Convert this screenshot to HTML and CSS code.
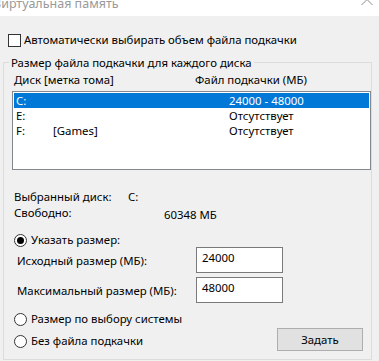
FILE: index.html
```html
<!DOCTYPE html>
<html lang="ru">
<head>
    <meta charset="UTF-8">
    <title>Виртуальная память</title>
    <link rel="stylesheet" href="styles.css">
</head>
<body>
    <div class="titlebar">
        <span class="title">Виртуальная память</span>
        <svg class="chev" width="12" height="7" viewBox="0 0 12 7"><path d="M0.5 6 L6 0.5 L11.5 6" fill="none" stroke="#8a8a8a" stroke-width="1"/></svg>
    </div>
    <div class="dialog">
        <label class="check"><span class="box"></span>Автоматически выбирать объем файла подкачки</label>
        <fieldset class="group">
            <legend>Размер файла подкачки для каждого диска</legend>
            <div class="cols">
                <span class="col-disk">Диск [метка тома]</span>
                <span>Файл подкачки (МБ)</span>
            </div>
            <div class="list">
                <div class="row selected"><span>C:</span><span></span><span>24000 - 48000</span></div>
                <div class="row"><span>E:</span><span></span><span>Отсутствует</span></div>
                <div class="row"><span>F:</span><span>[Games]</span><span>Отсутствует</span></div>
            </div>
            <div class="info">
                <div class="info-row"><span class="key k1">Выбранный диск:</span><span>C:</span></div>
                <div class="info-row free"><span class="key k2">Свободно:</span><span class="val">60348 МБ</span></div>
            </div>
            <label class="radio first"><span class="dot checked"></span>Указать размер:</label>
            <div class="size-row">
                <span class="size-label">Исходный размер (МБ):</span>
                <span class="field">24000</span>
            </div>
            <div class="size-row second">
                <span class="size-label">Максимальный размер (МБ):</span>
                <span class="field">48000</span>
            </div>
            <label class="radio sys"><span class="dot"></span>Размер по выбору системы</label>
            <div class="last-row">
                <label class="radio none"><span class="dot"></span>Без файла подкачки</label>
                <button class="btn">Задать</button>
            </div>
        </fieldset>
    </div>
</body>
</html>
```

FILE: styles.css
```css
*{
    margin: 0;
    padding: 0;
    box-sizing: border-box;
}
body{
    background: #f0f0f0;
    font-family: "Noto Sans", "Liberation Sans", sans-serif;
    font-size: 11.4px;
    color: #000;
    width: 379px;
    height: 361px;
    overflow: hidden;
}
.titlebar{
    background: #fff;
    height: 16px;
    overflow: hidden;
    display: flex;
    justify-content: space-between;
}
.title{
    color: #9a9a9a;
    font-size: 12.5px;
    line-height: 13px;
    margin-top: -3px;
    margin-left: -7px;
}
.chev{
    margin-right: 6px;
    margin-top: -1px;
}
.check{
    display: flex;
    align-items: center;
    height: 14px;
    margin-top: 17px;
    margin-left: 8px;
    line-height: 14px;
}
.box{
    width: 13px;
    height: 13px;
    border: 1px solid #333;
    background: #fff;
    margin-right: 3px;
}
.group{
    margin: 8px 0 0 3px;
    width: 367px;
    border: 1px solid #dcdcdc;
    padding: 0 0 8px 0;
}
.group legend{
    margin-left: 5px;
    padding: 0 2px;
    line-height: 15px;
}
.cols{
    display: flex;
    margin-top: 3px;
    padding-left: 10px;
    line-height: 14px;
}
.col-disk{
    width: 181px;
}
.list{
    margin: 4px 0 0 8px;
    width: 359px;
    height: 79px;
    border: 1px solid #828790;
    background: #fff;
    padding: 1px;
}
.row{
    display: grid;
    grid-template-columns: 37px 176px auto;
    height: 15px;
    line-height: 15px;
    padding-left: 2px;
}
.row.selected{
    background: #0078d7;
    color: #fff;
}
.info{
    margin: 20px 0 0 10px;
}
.info-row{
    display: flex;
    line-height: 14px;
    height: 16px;
}
.k1{
    width: 114px;
}
.k2{
    width: 150px;
}
.free .val{
    padding-top: 2px;
}
.radio{
    display: flex;
    align-items: center;
    height: 14px;
    line-height: 14px;
    margin-left: 10px;
}
.dot{
    width: 13px;
    height: 13px;
    border: 1px solid #333;
    border-radius: 50%;
    background: #fff;
    margin-right: 4px;
    display: flex;
    align-items: center;
    justify-content: center;
}
.dot.checked::after{
    content: "";
    width: 7px;
    height: 7px;
    border-radius: 50%;
    background: #000;
}
.first{
    margin-top: 11px;
}
.size-row{
    display: flex;
    align-items: center;
    height: 26px;
}
.second{
    margin-top: 4px;
}
.size-label{
    width: 192px;
    padding-left: 13px;
}
.field{
    width: 87px;
    height: 26px;
    border: 1px solid #7a7a7a;
    background: #fff;
    padding: 3px 0 0 5px;
    line-height: 14px;
}
.sys{
    margin-top: 9px;
}
.last-row{
    display: flex;
    align-items: center;
    height: 23px;
    margin-top: 2px;
}
.none{
    margin-top: 3px;
}
.btn{
    margin-left: auto;
    margin-right: 8px;
    width: 86px;
    height: 23px;
    border: 1px solid #adadad;
    background: #e1e1e1;
    font: inherit;
    color: #000;
}
```
